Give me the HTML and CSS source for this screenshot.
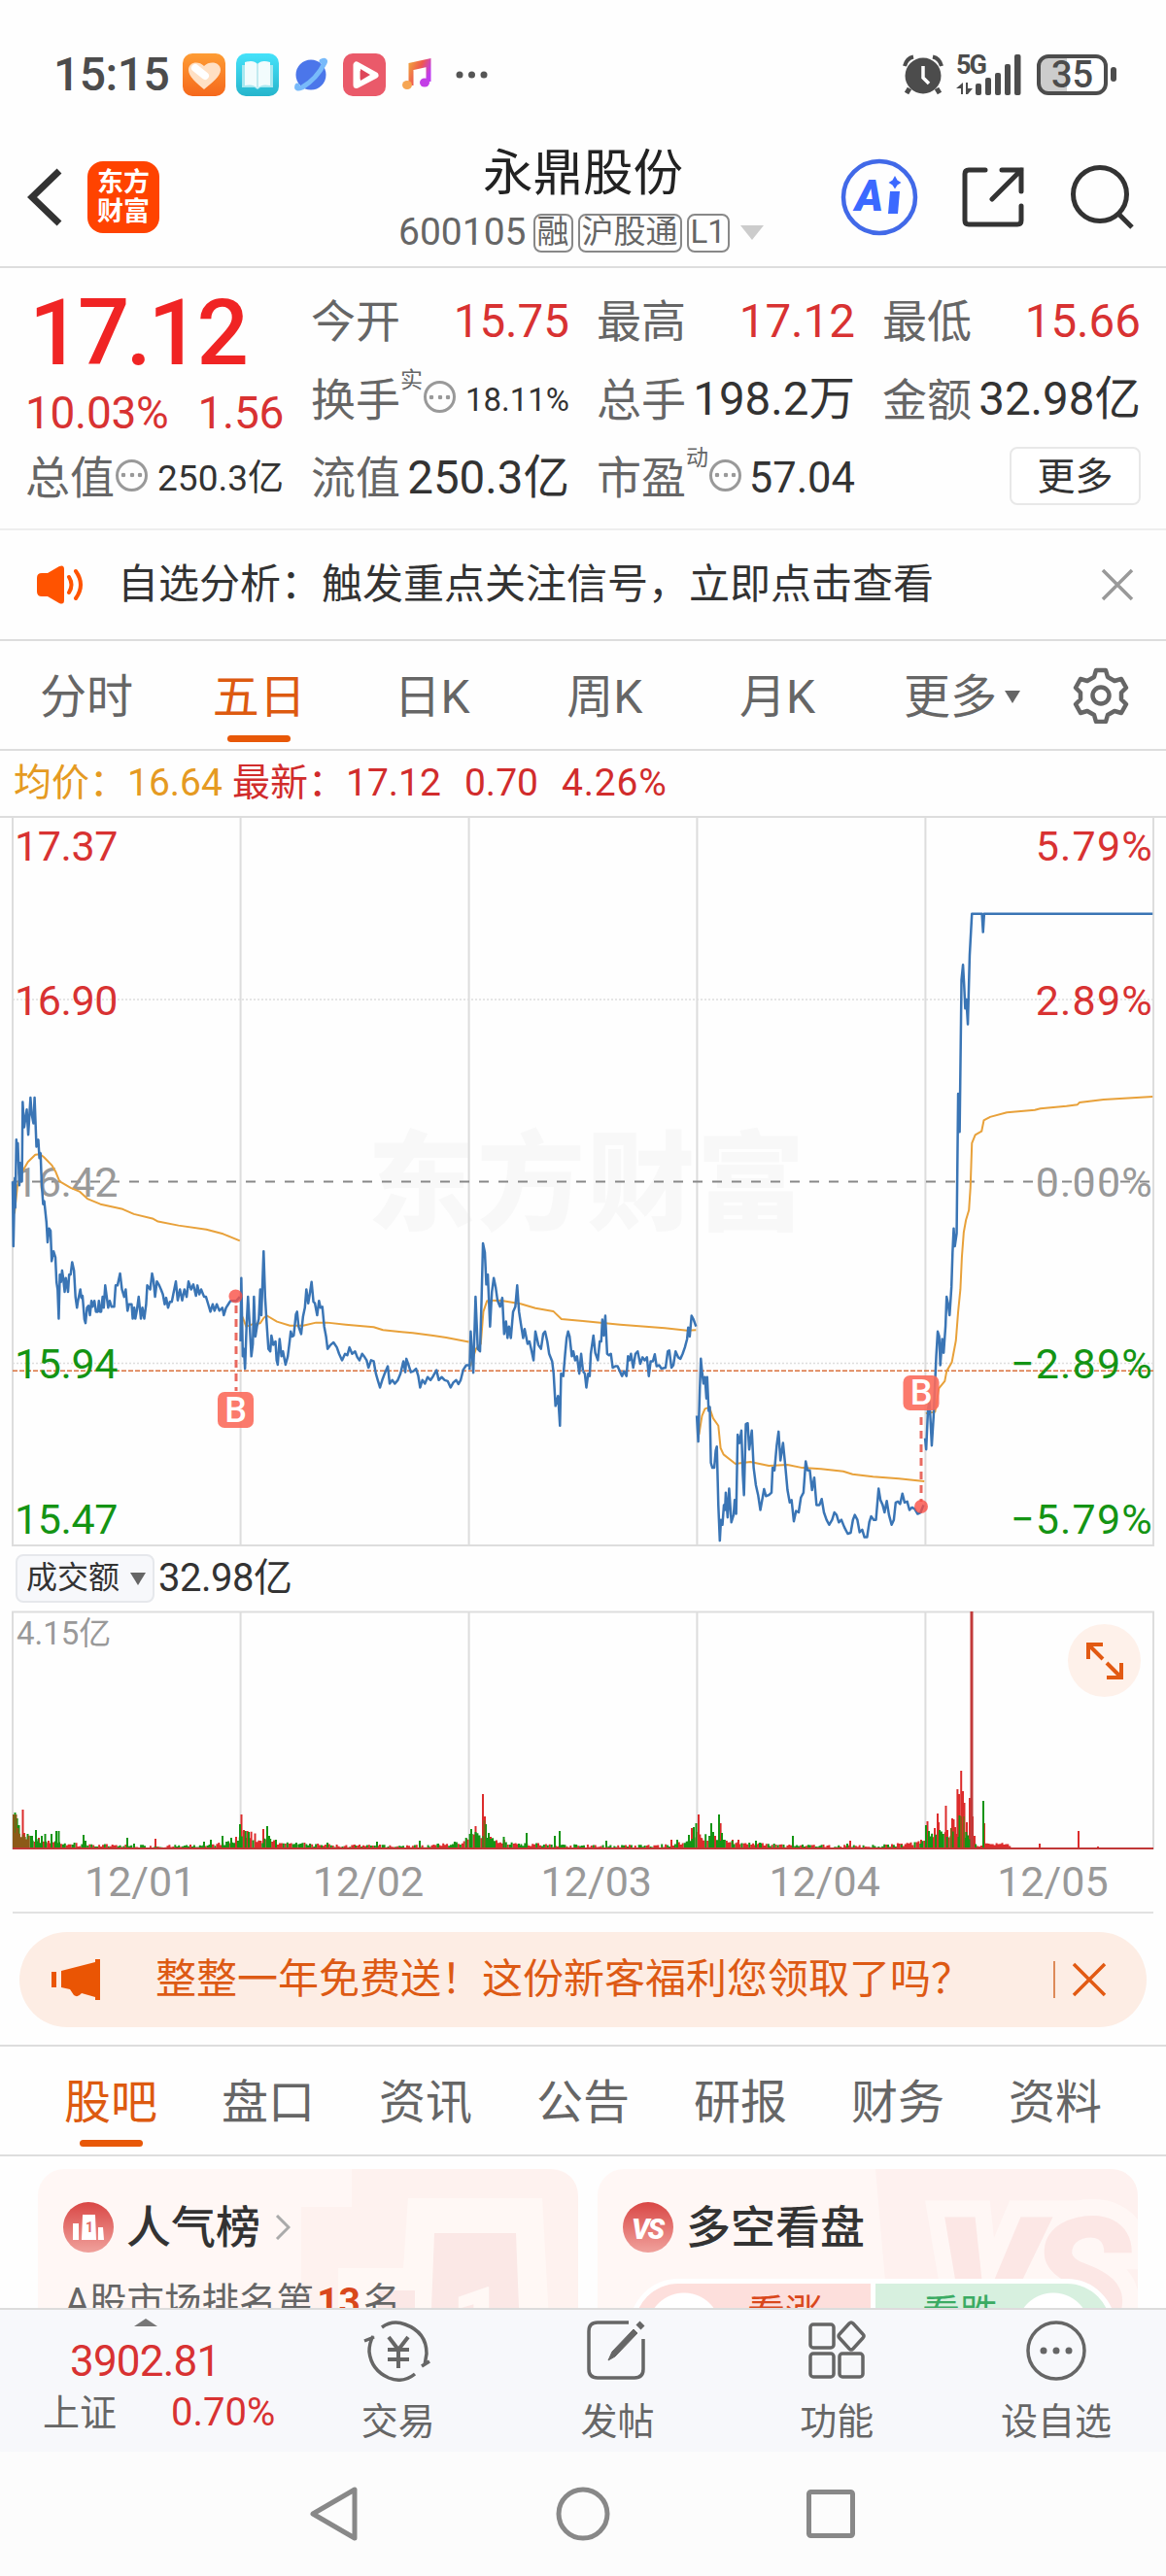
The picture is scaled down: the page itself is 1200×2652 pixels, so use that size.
FILE: index.html
```html
<!DOCTYPE html>
<html lang="zh-CN">
<head>
    <meta charset="UTF-8">
    <meta name="viewport" content="width=device-width, initial-scale=1.0">
    <title>永鼎股份 600105</title>
    <link rel="stylesheet" href="styles.css">
</head>
<body>
    <!-- Status bar -->
    <div class="status">
        <span class="clock">15:15</span>
        <svg class="app-ico" viewBox="0 0 44 44"><defs><linearGradient id="og" x2="0" y2="1"><stop stop-color="#fe9c34"/><stop offset="1" stop-color="#f5681c"/></linearGradient></defs><rect width="44" height="44" rx="10" fill="url(#og)"/><path d="M22 37C14 30 6 24 6 17c0-8 10-10 16-4 6-6 17-4 17 4 0 7-9 13-17 20z" fill="#ffe0c4"/><path d="M13 15l10 8" stroke="#fff" stroke-width="8" stroke-linecap="round"/></svg>
        <svg class="app-ico" viewBox="0 0 44 44"><defs><linearGradient id="tg" x2="0" y2="1"><stop stop-color="#45e2fa"/><stop offset="1" stop-color="#26b5cc"/></linearGradient></defs><rect width="44" height="44" rx="10" fill="url(#tg)"/><path d="M6 12h32v23H25l-3 2-3-2H6z" fill="#a8e8f0"/><path d="M9 9q9-3 13 2 4-5 13-2v24q-9-2-13 3-4-5-13-3z" fill="#f2fcfd"/><path d="M22 11v24" stroke="#c2eaf0" stroke-width="2"/></svg>
        <svg class="app-ico" viewBox="0 0 44 44"><circle cx="22" cy="22" r="15.500" fill="#4b76ea"/><path d="M8 33q-2 5 5 2Q28 26 36 10q2-4-3-2" fill="none" stroke="#78bafa" stroke-width="5" stroke-linecap="round"/></svg>
        <svg class="app-ico" viewBox="0 0 44 44"><rect width="44" height="44" rx="10" fill="#ea5a6a"/><path d="M14 12v20.500l19-10z" fill="#ea5a6a" stroke="#fff" stroke-width="7" stroke-linejoin="round"/><path d="M18 16v12l10-6z" fill="#de465a"/></svg>
        <svg class="app-ico" viewBox="0 0 44 44"><defs><linearGradient id="mg" x2="1" y2=".6"><stop stop-color="#f09a40"/><stop offset=".5" stop-color="#ef594e"/><stop offset="1" stop-color="#bf3cf0"/></linearGradient></defs><path d="M15 33V12l18-4v21M15 15l18-4" fill="none" stroke="url(#mg)" stroke-width="5"/><ellipse cx="11" cy="32.500" rx="5" ry="4.500" fill="#f6a552"/><ellipse cx="29" cy="30" rx="5" ry="4.500" fill="#c33fe6"/></svg>
        <svg class="dots" viewBox="0 0 34 10"><g fill="#555"><circle cx="4" cy="5" r="3.500"/><circle cx="16.500" cy="5" r="3.500"/><circle cx="29" cy="5" r="3.500"/></g></svg>
        <div class="status-right">
            <svg width="42" height="42" viewBox="0 0 42 42"><circle cx="21" cy="22" r="18.500" fill="#4c4c4c"/><path d="M7 35l-3 5M35 35l3 5" stroke="#4c4c4c" stroke-width="5"/><path d="M2 12Q4 4 11 2.500M40 12Q38 4 31 2.500" fill="none" stroke="#4c4c4c" stroke-width="4"/><path d="M21 12v12l6 6" fill="none" stroke="#fff" stroke-width="3.500"/></svg>
            <svg class="signal" width="68" height="42" viewBox="0 0 68 42"><text x="0" y="20" class="fiveg">5G</text><g fill="#4c4c4c"><path d="M7 29v12H5v-6H0zM10 29v12h2l5-6h-5v-6z"/><rect x="20" y="30" width="6" height="12" rx="2"/><rect x="30" y="24" width="6" height="18" rx="2"/><rect x="40" y="19" width="6" height="23" rx="2"/><rect x="50" y="10" width="6" height="32" rx="2"/><rect x="60" y="0" width="6.500" height="42" rx="2"/></g></svg>
            <div class="battery"><span>35</span></div>
        </div>
    </div>

    <!-- Title bar -->
    <div class="header">
        <div class="header-left">
            <svg width="36" height="60" viewBox="0 0 36 60"><path d="M33 3L5 30l28 27" fill="none" stroke="#333" stroke-width="7"/></svg>
            <div class="logo">东方<br>财富</div>
        </div>
        <div class="title">
            <h1>永鼎股份</h1>
            <div class="code">600105<span class="badge">融</span><span class="badge">沪股通</span><span class="badge">L1</span><i class="tri big"></i></div>
        </div>
        <div class="header-right">
            <svg width="80" height="80" viewBox="0 0 80 80"><circle cx="40" cy="40" r="37" fill="none" stroke="#4169e8" stroke-width="4.500"/><text x="15" y="54" class="ai">A</text><path d="M51 34h10l-2 23h-10z" fill="#3b69ff"/><path d="M56 18l2.500 4.500 4 2.500-4 2.500-2.500 4-2.500-4-4-2.500 4-2.500z" fill="#3b69ff"/></svg>
            <svg class="share" width="66" height="66" viewBox="0 0 66 66"><g fill="none" stroke="#333" stroke-width="5" stroke-linecap="round"><path d="M25 5H8Q4 5 4 9v48q0 4 4 4h50q4 0 4-4V42M42 5h20v22M62 5L32 35"/></g></svg>
            <svg width="68" height="68" viewBox="0 0 68 68"><g fill="none" stroke="#333" stroke-width="5"><circle cx="32" cy="31" r="27.500"/><path d="M51 51l14 14"/></g></svg>
        </div>
    </div>

    <!-- Quote -->
    <div class="quote">
        <div class="price-box">
            <div class="price">17.12</div>
            <div class="change"><span>10.03%</span><span>1.56</span></div>
        </div>
        <div class="item"><label>今开</label><b class="red">15.75</b></div>
        <div class="item"><label>最高</label><b class="red">17.12</b></div>
        <div class="item"><label>最低</label><b class="red">15.66</b></div>
        <div class="item"><label>换手</label><sup>实</sup><i class="info"></i><b class="xs">18.11%</b></div>
        <div class="item"><label>总手</label><b>198.2万</b></div>
        <div class="item"><label>金额</label><b>32.98亿</b></div>
        <div class="item"><label>总值</label><i class="info"></i><b class="sm">250.3亿</b></div>
        <div class="item"><label>流值</label><b>250.3亿</b></div>
        <div class="item"><label>市盈</label><sup>动</sup><i class="info"></i><b class="md">57.04</b></div>
        <div class="item"><button class="more">更多</button></div>
    </div>

    <div class="notice">
        <svg width="50" height="42" viewBox="0 0 50 42"><path d="M0 14q0-5 5-5h6L23 2q5-2 5 3v32q0 5-5 3l-12-7H5q-5 0-5-5z" fill="#ff5300"/><path d="M33 13q5 8 0 16M40 7q10 14 0 28" fill="none" stroke="#ff5300" stroke-width="4" stroke-linecap="round"/></svg>
        <span>自选分析：触发重点关注信号，立即点击查看</span>
        <svg width="34" height="34" viewBox="0 0 34 34"><path d="M2 2l30 30M32 2L2 32" stroke="#999" stroke-width="3.500"/></svg>
    </div>

    <div class="tabs period">
        <a>分时</a>
        <a class="on">五日</a>
        <a>日K</a>
        <a>周K</a>
        <a>月K</a>
        <a>更多<i class="tri"></i></a>
        <svg width="58" height="58" viewBox="0 0 58 58"><g fill="none" stroke="#666" stroke-width="4.500" stroke-linejoin="round"><path d="M24 3h10l2 7 7 4 7-2 5 9-5 5v7l5 5-5 9-7-2-7 4-2 7H24l-2-7-7-4-7 2-5-9 5-5v-7l-5-5 5-9 7 2 7-4z"/><circle cx="29" cy="29" r="8.500"/></g></svg>
    </div>

    <div class="legend">
        <span class="avg">均价：16.64</span><span>最新：17.12</span><span>0.70</span><span>4.26%</span>
    </div>

    <!-- Five-day price chart -->
    <svg class="chart" viewBox="0 10 1200 753">
        <text x="378" y="428" class="watermark">东方财富</text>
        <g stroke="#ddd" stroke-width="2" fill="none">
            <path d="M0 11H1200M13 11V761H1187V11M247.600 11V761M482.600 11V761M717.400 11V761M952.400 11V761"/>
            <path d="M13 199H1187M13 573.500H1187" stroke-width="1.500" stroke-dasharray="2 2"/>
        </g>
        <path d="M13 386.500H1187" stroke="#888" stroke-width="2" stroke-dasharray="10 10"/>
        <path d="M13 581.200H1187" stroke="#d9713c" stroke-width="1.500" stroke-dasharray="5 2"/>
        <g class="axis">
            <text x="15" y="56" class="up">17.37</text>
            <text x="15" y="215" class="up">16.90</text>
            <text x="15" y="402">16.42</text>
            <text x="15" y="589" class="down">15.94</text>
            <text x="15" y="749" class="down">15.47</text>
        </g>
        <g class="axis end">
            <text x="1187" y="56" class="up">5.79%</text>
            <text x="1187" y="215" class="up">2.89%</text>
            <text x="1187" y="402">0.00%</text>
            <text x="1187" y="589" class="down">−2.89%</text>
            <text x="1187" y="749" class="down">−5.79%</text>
        </g>
        <g class="line average">
            <path transform="scale(.38265 .5102)" d="M39 822L47 765 58 740 75 718 95 703 108 702 118 708 140 725 150 738 160 757 190 770 215 778 235 792 270 803 330 813 360 823 410 832 425 838 480 846 555 854 600 863 645 877M652 1030L662 1050 680 1045 700 1043 710 1032 718 1028 745 1040 780 1048 815 1048 850 1042 880 1042 930 1046 1005 1051 1030 1057 1080 1061 1110 1063 1165 1068 1200 1072 1261 1081M1265 1130L1280 1095 1293 1085 1300 1020 1310 998 1345 997 1400 1004 1440 1013 1488 1019 1510 1035 1568 1039"/>
            <path transform="translate(600 0) scale(.38265 .5102)" d="M0 1039L60 1043 100 1046 220 1053 280 1058 304 1057M312 1268L320 1230 328 1216 340 1213 350 1235 364 1250 370 1295 378 1308 410 1327 450 1323 500 1331 550 1329 590 1335 640 1337 700 1342 725 1348 780 1353 850 1357 918 1362M922 1225L947 1222 957 1175 973 1160 978 1140 992 1122 1003 1078 1009 1020 1015 975 1019 910 1024 860 1030 835 1038 815 1042 770 1046 680 1055 663 1072 656 1078 634 1095 627 1140 618 1215 613 1230 610 1300 605 1330 602 1335 598 1400 592 1532 586"/>
        </g>
        <g class="line">
            <path transform="scale(.38265 .5102)" d="M34 757L36 888 40 750 41 810 44 673 46 710 48 680 52 765 54 720 57 757 59 757 61 597 65 648 72 612 76 663 82 588 85 620 90 640 93 588 98 687 103 673 106 710 109 700 112 760 116 803 119 797 125 840 128 880 132 852 136 857 139 918 144 898 149 910 152 960 155 975 158 1034 161 945 164 960 167 937 170 952 174 980 177 952 183 980 186 945 190 945 194 920 199 937 203 990 207 1012 210 997 216 975 219 992 222 988 227 1035 230 1043 234 1012 238 1008 242 1027 246 998 249 1010 254 998 258 1020 263 1020 266 998 269 1020 272 1020 276 990 279 1012 283 967 287 990 291 1012 295 998 300 1010 307 1010 311 967 316 967 323 943 328 975 334 990 338 975 343 1018 347 1005 354 1005 357 1034 361 1012 364 1034 368 1018 373 990 379 1034 383 1012 388 1034 393 1005 396 967 404 975 409 943 413 958 417 990 422 959 427 965 433 975 438 985 443 1005 447 992 452 1012 457 1000 462 1000 466 985 473 959 478 997 484 975 490 997 496 975 502 990 507 959 514 975 520 965 527 988 531 967 536 985 541 975 549 990 554 990 560 1005 566 1020 572 1005 577 1018 583 1005 590 1018 598 1012 602 1027 608 1012 614 1005 620 998 628 998 636 998 645 990M647 1080L649 952 653 1110 656 1095 659 1135 663 1050 667 990 671 1040 676 1110 680 1085 683 990 687 1070 691 1050 696 1035 700 975 703 1027 709 898 713 990 717 1040 722 1095 727 1100 730 1068 735 1087 741 1080 744 1118 747 1127 752 1075 757 1110 761 1100 768 1127 774 1110 779 1080 782 1060 786 1070 790 1068 796 1025 799 1020 803 1050 810 1065 815 1030 820 1012 824 975 829 1003 833 985 838 960 843 1000 847 1003 853 1027 858 998 862 1012 867 1010 872 1050 877 1070 881 1095 889 1087 897 1082 906 1092 912 1105 920 1118 928 1105 934 1108 940 1092 947 1105 955 1100 961 1112 967 1118 974 1105 981 1112 986 1118 991 1133 998 1118 1005 1120 1011 1145 1016 1158 1022 1173 1028 1158 1036 1142 1043 1130 1048 1165 1055 1158 1062 1165 1070 1158 1077 1145 1085 1120 1090 1142 1093 1115 1100 1130 1105 1142 1112 1140 1119 1135 1125 1150 1130 1173 1136 1158 1143 1165 1150 1152 1158 1158 1165 1150 1174 1138 1180 1158 1188 1152 1196 1158 1204 1160 1212 1173 1219 1163 1227 1158 1233 1166 1239 1158 1246 1137 1254 1128 1261 1128M1263 1137L1266 1060 1273 1143 1279 990 1285 1095 1291 1100 1295 1000 1299 882 1304 900 1308 965 1312 945 1318 1050 1323 980 1328 952 1333 970 1338 997 1345 1010 1351 992 1356 1065 1361 1040 1365 1073 1369 1050 1374 1073 1380 1020 1386 1010 1391 967 1396 1020 1401 1045 1407 1073 1411 1055 1419 1085 1424 1080 1430 1100 1435 1118 1440 1060 1448 1087 1455 1095 1461 1065 1466 1060 1472 1080 1477 1105 1485 1120 1489 1145 1494 1210 1501 1190 1506 1250 1509 1145 1515 1150 1520 1105 1524 1073 1528 1060 1532 1070 1538 1110 1542 1100 1547 1118 1552 1110 1558 1145 1563 1105 1568 1140"/>
            <path transform="translate(600 0) scale(.38265 .5102)" d="M0 1140L5 1145 9 1173 14 1145 18 1150 21 1105 28 1068 33 1103 40 1118 45 1080 49 1080 52 1036 56 1068 60 1028 65 1105 70 1108 75 1105 80 1133 87 1130 93 1130 99 1140 105 1150 110 1140 117 1150 121 1110 125 1118 129 1105 135 1133 141 1105 147 1100 154 1125 160 1112 166 1118 172 1112 177 1150 182 1120 188 1120 193 1106 198 1130 205 1128 211 1135 222 1133 228 1100 232 1098 238 1133 243 1128 249 1100 256 1112 262 1115 268 1105 274 1092 280 1075 283 1052 287 1070 292 1028 297 1035 304 1050M306 1230L310 1282 314 1180 317 1115 320 1140 324 1165 328 1152 332 1195 334 1152 338 1220 341 1212 344 1325 348 1335 353 1335 357 1300 360 1292 364 1410 368 1482 371 1440 375 1450 379 1410 382 1420 384 1385 389 1435 393 1377 399 1445 405 1430 408 1400 412 1428 416 1268 421 1285 426 1260 430 1350 433 1390 438 1247 443 1245 447 1298 454 1260 459 1335 465 1370 471 1390 477 1420 483 1395 487 1378 492 1392 500 1390 507 1385 510 1335 515 1340 521 1290 526 1262 531 1320 538 1285 544 1330 550 1380 556 1405 561 1400 567 1443 573 1422 580 1425 586 1395 593 1385 599 1322 604 1340 610 1340 616 1380 622 1355 628 1410 636 1410 642 1398 648 1425 655 1440 662 1450 670 1440 676 1425 682 1430 688 1445 695 1440 703 1455 712 1468 720 1466 726 1440 731 1430 738 1440 744 1465 751 1460 757 1475 764 1475 770 1445 775 1433 782 1440 788 1440 795 1377 800 1400 806 1410 811 1425 817 1402 823 1430 830 1450 836 1440 841 1405 847 1403 853 1408 859 1387 865 1405 872 1403 878 1420 885 1415 892 1418 900 1428 908 1425 916 1410M920 1275L923 1298 928 1215 932 1200 938 1290 943 1230 947 1160 950 1110 954 1060 958 1070 961 1128 966 1075 970 1103 975 1050 978 990 982 1005 986 1027 991 970 994 900 997 852 1000 888 1005 862 1009 580 1013 657 1018 350 1022 320 1025 360 1028 408 1031 390 1035 440 1040 300 1046 217 1073 217 1076 254 1079 217 1532 217"/>
        </g>
        <!-- Buy markers -->
        <g class="buy">
            <path d="M243 514V602M948 629V716"/>
            <circle cx="242.500" cy="504.500" r="7"/><circle cx="948" cy="721" r="7"/>
            <rect x="224" y="603" width="37" height="37" rx="7"/><rect x="329.500" y="586" width="37" height="36" rx="7" transform="translate(600 0)"/>
            <text x="242.500" y="634">B</text><text x="948" y="616">B</text>
        </g>
    </svg>

    <div class="vol-head"><span class="select">成交额<i class="tri"></i></span>32.98亿</div>

    <div class="volume">
        <svg viewBox="0 1658 1200 248">
            <path d="M13 1904V1659.500H1187V1904M247.600 1660V1904M482.600 1660V1904M717.400 1660V1904M952.400 1660V1904" fill="none" stroke="#ddd" stroke-width="2"/>
            <text x="17" y="1693" class="vol-max">4.15亿</text>
            <path id="volRed" stroke="#dc2c2c" stroke-width="2"/>
            <path id="volGreen" stroke="#149414" stroke-width="2"/>
            <path id="volMix" stroke="#8c5a18" stroke-width="2"/>
            <path id="volTall" stroke="#c13a3a" stroke-width="3"/>
            <path d="M13 1903H1187" stroke="#c03838" stroke-width="2"/>
        </svg>
        <div class="expand"><svg width="38" height="38" viewBox="0 0 38 38"><path d="M2 17V2h15M2 2l15 15M36 21v15H21M36 36L21 21" fill="none" stroke="#e25a13" stroke-width="4"/></svg></div>
    </div>
    <div class="dates"><span>12/01</span><span>12/02</span><span>12/03</span><span>12/04</span><span>12/05</span></div>

    <div class="promo">
        <svg width="50" height="42" viewBox="0 0 50 42"><path d="M0 13h5v16H0zM10 12L45 3V0h5v42h-5v-3l-14-4q-4 5-8 2l-4-6-9-2z" fill="#ea5504"/></svg>
        <span>整整一年免费送！这份新客福利您领取了吗？</span>
        <i></i>
        <svg width="36" height="36" viewBox="0 0 36 36"><path d="M2 2l32 32M34 2L2 34" stroke="#e25a13" stroke-width="3.500"/></svg>
    </div>

    <div class="tabs section">
        <a class="on">股吧</a>
        <a>盘口</a>
        <a>资讯</a>
        <a>公告</a>
        <a>研报</a>
        <a>财务</a>
        <a>资料</a>
    </div>

    <div class="cards">
        <div class="card">
            <svg class="card-bg" viewBox="0 0 556 220"><path d="M271 220V39h52V0h200q33 0 33 30v190z" fill="#fef2ef"/><path d="M309 220V102h67l5-72h138l7 125h15v65z" fill="#fff8f5"/><path d="M350 220v-95h38v95zM402 220l6-154h84l6 154zM512 220v-65h32v65z" fill="#fbe8e6"/><text x="425" y="190" class="one">1</text></svg>
            <div class="card-title">
                <svg width="52" height="52" viewBox="0 0 52 52"><use href="#disc"/><path d="M10 39V22h6v17zM19 39l1-26h13l1 26zM36 39V26h5l1 13z" fill="#fff"/><text x="23" y="31" class="mini">1</text></svg>
                人气榜
                <svg class="arrow" width="16" height="26" viewBox="0 0 16 26"><path d="M2 1l12 12L2 25" fill="none" stroke="#aaa" stroke-width="3"/></svg>
            </div>
            <div class="rank">A股市场排名第<b>13</b>名</div>
        </div>
        <div class="card">
            <svg class="card-bg" viewBox="0 0 556 220"><path d="M286 0h240q30 0 30 30v190H305z" fill="#fef1ef"/><text x="346" y="172" class="vs-bg">VS</text></svg>
            <div class="card-title">
                <svg width="52" height="52" viewBox="0 0 52 52"><defs><linearGradient id="rg" x2="0" y2="1"><stop stop-color="#d94745"/><stop offset="1" stop-color="#f0a19c"/></linearGradient></defs><circle id="disc" cx="26" cy="26" r="26" fill="url(#rg)"/><text x="9" y="38" class="vs">VS</text></svg>
                多空看盘
            </div>
            <div class="vote"><span class="bull">看涨</span><span class="bear">看跌</span></div>
        </div>
    </div>

    <!-- Bottom toolbar -->
    <div class="toolbar">
        <div class="index">
            <i class="caret"></i>
            <div class="point">3902.81</div>
            <div class="pct"><label>上证</label><span>0.70%</span></div>
        </div>
        <a><svg viewBox="0 0 72 64"><path d="M19 8Q30 0 43 5q22 8 22 30l-2 12M53 56q-12 10-27 4Q8 52 6 33q0-9 4-16M1 22l10-4M60 48l8-5" stroke-width="3.500"/><path d="M26 18l10 13 10-13M36 31v19M25 31h22M25 41h22" stroke-width="4"/></svg>交易</a>
        <a><svg viewBox="0 0 72 64"><path d="M48 3H16Q7 3 7 12v39q0 9 9 9h38q9 0 9-9V20"/><path d="M27 42l4-9L53 10l4 4-23 24z" fill="#666" stroke-width="1"/><path d="M58 8l4-4" stroke-width="7"/></svg>发帖</a>
        <a><svg viewBox="0 0 72 64"><rect x="9" y="5" width="24" height="24" rx="3"/><rect x="9" y="35" width="24" height="24" rx="3"/><rect x="39" y="35" width="24" height="24" rx="3"/><path d="M49 4q2-2 4 0l10 11q2 2 0 4L53 30q-2 2-4 0L39 19q-2-2 0-4z"/></svg>功能</a>
        <a><svg viewBox="0 0 72 64"><circle cx="36" cy="32" r="29"/><g fill="#666" stroke="none"><circle cx="23" cy="32" r="3.500"/><circle cx="36" cy="32" r="3.500"/><circle cx="49" cy="32" r="3.500"/></g></svg>设自选</a>
    </div>

    <div class="sysnav">
        <svg width="58" height="58" viewBox="0 0 58 58"><path d="M49 4v50L6 29z"/></svg>
        <svg width="58" height="58" viewBox="0 0 58 58"><circle cx="29" cy="29" r="25"/></svg>
        <svg width="58" height="58" viewBox="0 0 58 58"><rect x="6.500" y="6.500" width="45" height="45" rx="2"/></svg>
    </div>

    <script src="volume.js"></script>
</body>
</html>
```
FILE: styles.css
```css
* { margin: 0; padding: 0; box-sizing: border-box; }
body { width: 1200px; height: 2652px; overflow: hidden; background: #fefefe; color: #333; font-family: Roboto, "Noto Sans CJK SC", sans-serif; line-height: 1; }
svg { display: block; flex: none; }
i { display: block; font-style: normal; }
b { font-weight: 400; }

/* Status bar */
.status { display: flex; align-items: center; height: 142px; padding: 12px 51px 0 55px; color: #4c4c4c; }
.clock { width: 133px; font-size: 48px; font-weight: 500; letter-spacing: -0.5px; }
.app-ico { width: 44px; height: 44px; margin-right: 11px; }
.dots { width: 34px; height: 10px; margin-left: 6px; }
.status-right { display: flex; align-items: center; margin-left: auto; }
.signal { margin: 0 15px 0 13px; overflow: visible; }
.fiveg { font-size: 27px; font-weight: 700; fill: #4c4c4c; letter-spacing: -2px; }
.battery { position: relative; width: 73px; height: 42px; margin-right: 9px; border: 4px solid #4c4c4c; border-radius: 12px; background: linear-gradient(90deg, #ccc 42%, #fff 42%); font-size: 38px; font-weight: 500; line-height: 35px; text-align: center; }
.battery::after { content: ""; position: absolute; right: -13px; top: 9px; width: 6px; height: 15px; border-radius: 3px; background: #4c4c4c; }

/* Title bar */
.header { display: flex; justify-content: space-between; height: 134px; border-bottom: 2px solid #ddd; }
.header-left, .header-right { display: flex; align-items: center; width: 340px; height: 122px; }
.header-left { padding-left: 28px; }
.header-right { padding-left: 5px; }
.logo { width: 74px; height: 74px; margin-left: 26px; padding-top: 7px; border-radius: 16px; background: #ff4300; color: #fff; font-size: 27px; font-weight: 700; line-height: 30px; text-align: center; }
.title { width: 400px; text-align: center; }
h1 { height: 67px; padding-top: 10px; font-size: 51.5px; font-weight: 400; line-height: 54px; color: #222; }
.code { display: flex; align-items: center; height: 61px; padding-left: 10px; color: #666; font-size: 39px; white-space: nowrap; }
.badge { height: 40px; margin-left: 5px; padding: 0 2px; border: 2px solid #888; border-radius: 8px; font-size: 33px; line-height: 34px; }
.code .badge:nth-child(1) { margin-left: 7px; }
.tri { width: 0; border: solid transparent; border-width: 13px 8px 0; border-top-color: #666; }
.tri.big { margin-left: 11px; border-width: 15px 12px 0; border-top-color: #ccc; }
.ai { font-size: 44px; font-weight: 900; font-style: italic; fill: #3b69ff; }
.share { margin: 0 45px 0 44px; }

/* Quote */
.quote { display: grid; grid-template-columns: repeat(4, 266px); grid-template-rows: repeat(3, 80.5px); column-gap: 28px; height: 270px; padding: 15px 0 0 26px; border-bottom: 2px solid #eee; }
.price-box { grid-row: span 2; color: #f02424; }
.price { height: 105px; padding: 5px 0 0 4px; font-size: 94px; font-weight: 500; letter-spacing: -3.5px; }
.change { display: flex; justify-content: space-between; color: #d83232; font-size: 46px; line-height: 58px; letter-spacing: -0.3px; }
.item { display: flex; align-items: center; white-space: nowrap; }
.item label { color: #666; font-size: 46px; }
.item b { margin-left: auto; font-size: 47.5px; }
.item b.xs { font-size: 33px; }
.item b.sm { font-size: 37px; }
.item b.md { font-size: 43.5px; }
.item b.red { color: #d83232; }
.item sup { align-self: flex-start; padding-top: 8px; color: #666; font-size: 23px; }
.info { width: 33px; height: 33px; margin: -6px 0 0 1px; border: 3px solid #999; border-radius: 50%; background: radial-gradient(circle, #999 2px, transparent 2.600px) center / 8px 8px no-repeat, radial-gradient(circle, #999 2px, transparent 2.600px) 1px center / 8px 8px no-repeat, radial-gradient(circle, #999 2px, transparent 2.600px) 18px center / 8px 8px no-repeat; }
.more { width: 135px; height: 60px; margin: -4px 0 0 auto; border: 2px solid #e8e8e8; border-radius: 8px; background: #fff; color: #333; font: 400 39px/48px "Noto Sans CJK SC", sans-serif; padding-bottom: 6px; }

.notice { display: flex; align-items: center; height: 114px; padding: 0 33px 0 38px; border-bottom: 2px solid #ddd; font-size: 42px; }
.notice span { flex: 1; margin-left: 33px; }

/* Tabs */
.tabs { display: flex; align-items: center; height: 113px; border-bottom: 2px solid #ddd; color: #666; font-size: 48px; }
.tabs a { display: flex; position: relative; align-items: center; justify-content: center; height: 111px; padding-top: 4px; }
.tabs .on { color: #dd5a10; }
.tabs .on::after { content: ""; position: absolute; bottom: 7px; width: 65px; height: 7px; border-radius: 4px; background: #e85808; }
.period { padding-left: -1px; }
.period a { width: 177.8px; }
.period a:nth-child(6) { width: 202px; }
.tabs .tri { margin-left: 8px; }
.period svg { margin-left: 13px; }
.section { padding-left: 33px; }
.section a { width: 162px; }
.section .on::after { bottom: 8px; }

.legend { display: flex; height: 67px; padding-left: 14px; color: #d12c2c; font-size: 39px; line-height: 66px; }
.legend span { margin-right: 24px; }
.legend span:last-child { letter-spacing: 0.8px; }
.legend .avg { margin-right: 10px; color: #e59a22; }

/* Price chart */
.chart { width: 1200px; height: 753px; }
.axis { font-size: 43px; fill: #999; letter-spacing: -0.4px; }
.axis.end { text-anchor: end; letter-spacing: 1.2px; }
.up { fill: #d83232; }
.down { fill: #149414; }
.line { fill: none; stroke: #3a75b5; stroke-width: 2.500; stroke-linejoin: round; }
.line path { vector-effect: non-scaling-stroke; }
.line.average { stroke: #e8a13a; stroke-width: 2; }
.watermark { font-size: 111px; font-weight: 900; fill: #f8f8f8; letter-spacing: 2px; }
.buy { fill: #f94f45; fill-opacity: .8; }
.buy path { stroke: #e96a60; stroke-width: 3; stroke-dasharray: 8 6; }
.buy rect { fill: #fb6c5c; fill-opacity: .9; }
.buy text { font-size: 36px; font-weight: 500; fill: #fff; fill-opacity: 1; text-anchor: middle; }

/* Volume */
.vol-head { display: flex; align-items: center; height: 65px; padding: 0 0 2px 16px; font-size: 40px; letter-spacing: -0.500px; }
.select { display: flex; align-items: center; width: 143px; height: 50px; margin-right: 4px; padding: 0 0 2px 9px; border: 2px solid #e6e8ec; border-radius: 8px; background: #f7f8fb; font-size: 32px; letter-spacing: 0; }
.select .tri { margin: 3px 0 0 11px; }
.volume { position: relative; height: 248px; }
.vol-max { font-size: 33px; fill: #999; }
.expand { display: flex; position: absolute; top: 14px; right: 26px; align-items: center; justify-content: center; width: 75px; height: 75px; border-radius: 50%; background: #fef1ea; }
.dates { display: flex; height: 64px; margin: 0 13px; padding-left: 20px; border-bottom: 2px solid #e2e2e2; color: #999; font-size: 43px; line-height: 62px; }
.dates span { width: 234.800px; flex: none; padding-left: 54px; }

.promo { display: flex; align-items: center; height: 98px; margin: 19px 20px 18px; padding: 0 41px 0 33px; border-radius: 49px; background: #fdede4; color: #dd5a14; font-size: 42px; }
.promo span { flex: 1; margin-left: 57px; white-space: nowrap; }
.promo i { width: 2px; height: 38px; margin-right: 17px; background: #dd8a58; }
.section { border-top: 2px solid #ddd; height: 115px; }

/* Cards */
.cards { display: flex; gap: 20px; height: 156px; padding: 13px 29px 0 39px; overflow: hidden; }
.card { position: relative; width: 556px; height: 220px; border-radius: 27px; background: #fff7f5; overflow: hidden; }
.card-bg { position: absolute; inset: 0; width: 556px; height: 220px; }
.card-title { display: flex; position: relative; align-items: center; height: 119px; padding-left: 26px; color: #333; font-size: 46px; font-weight: 500; }
.card-title svg:first-child { margin-right: 13px; }
.card-title .arrow { margin-left: 15px; }
.rank { position: relative; margin-top: -2px; padding-left: 28px; color: #666; font-size: 38.5px; line-height: 40px; }
.rank b { padding: 0 3px; color: #d9481c; font-size: 39px; font-weight: 700; }
.one { font-size: 96px; font-weight: 900; fill: #fff8f5; }
.mini { font-size: 14px; font-weight: 700; fill: #e06b67; }
.vs { font: italic 900 29px Roboto, sans-serif; fill: #fff; letter-spacing: -2px; }
.vs-bg { font: italic 900 172px Roboto, sans-serif; fill: #fce7e5; letter-spacing: -12px; stroke: #fff7f5; stroke-width: 34; paint-order: stroke; }
.vote { display: flex; position: relative; gap: 5px; width: 500px; height: 100px; margin: -6px 0 0 33px; border: 5px solid #fff; border-radius: 50px; background: #fff; overflow: hidden; font-size: 39px; line-height: 62px; }
.vote span { flex: none; width: 243px; background: radial-gradient(circle at 51px 47px, #fff 37px, transparent 38px) #fddfdc; color: #d9481c; padding-left: 116px; }
.vote .bear { background: radial-gradient(circle at 183px 47px, #fff 37px, transparent 38px) #d7f0df; color: #3bab63; padding-left: 48px; }

/* Bottom toolbar */
.toolbar { display: flex; height: 148px; border-top: 2px solid #dcdcdc; background: #f7f8fb; color: #666; font-size: 38px; }
.toolbar a { display: flex; flex-direction: column; align-items: center; width: 226px; padding-top: 10px; line-height: 82px; }
.toolbar a svg { width: 72px; height: 64px; fill: none; stroke: #666; stroke-width: 3.500; }
.index { width: 297px; padding-top: 9px; color: #d83232; }
.caret { width: 0; margin-left: 138px; border: solid transparent; border-width: 0 12px 8px; border-bottom-color: #777; }
.point { padding-left: 72px; font-size: 44px; line-height: 72px; letter-spacing: -0.8px; }
.pct { display: flex; padding-left: 44px; line-height: 34px; }
.pct label { width: 132px; color: #666; }
.pct span { font-size: 40px; }

.sysnav { display: flex; justify-content: center; gap: 197px; height: 129px; padding-top: 35px; background: #fcfcfc; }
.sysnav svg { fill: none; stroke: #888; stroke-width: 5; stroke-linejoin: round; }
```
FILE: volume.js
```js
// x position -> bar height, grouped by colour
var red = [[23.5,41],[25,17],[40,12],[50,9],[160,11],[243,13],[248.5,36],[251,20],[253,12],[271,21],[319,6],[365,5],[391,5],[480,11],[489.5,24],[497,57],[499,34],[505,13],
    [691,10],[712,22],[719,36],[721,12],[736,11],[741.6,27],[754,10],[760,10],[875,9],[928,6],[948,10],[954.5,29],[962,22],[965,37],[966,28],[973.5,45],[975,20],[980,32],[981.5,31],[983,23],[985.4,62],[987,57],[989.2,81],[991,60],[992.5,48],[995,28],[998,53],[1001,34],[1003,14],[1013,27],[1017.5,6],[1027,5],[1070,6],[1110,19],[1130,3]];
var green = [[15.5,38],[17.6,32],[19.5,25],[28.5,16],[33,14],[37,20],[43,14],[46.5,16],[53,16],[58,19],[60.5,19],[86,15],[88,9],[131,12],[138,6],[210,8],[217,10],[229,14],[238,12],[247,26],[256,18],[275,24],[277,14],[284,10],[305,7],[337,7],[388,8],[432,9],[451,6],[485,21],[500,26],[503,17],[518.5,13],[534,6],[542,17],[571,14],[576,19],
    [624,9],[697,10],[709,15],[714,23],[716.5,27],[732,27],[734,18],[740,36],[743,17],[778,9],[782,7],[816,14],[872,6],[914,5],[953,25],[956,19],[967,20],[987.5,35],[1012,50]];
var mix = [[14,36],[16.5,36],[18.5,22],[498.5,30],[989,34],[992,34],[979,22]];

var seed = 7;
function rnd() {
    seed = (seed * 16807) % 2147483647;
    return seed / 2147483647;
}

function bar(p) {
    return "M" + p[0].toFixed(1) + " 1904V" + (1904 - p[1]).toFixed(1);
}

// low-volume minutes: busy at the open, quiet at midday, picking up at the close
for (var i = 0; i < 600; i++) {
    var day = Math.floor(i / 120), t = (i % 120) / 120;
    var x = 14 + day * 234.8 + t * 234.8;
    var open = 17 * Math.exp(-t * 7), close = 11 * Math.pow(t, 14);
    var h = 1.5 + rnd() * 3.2 + (open + close) * (0.5 + rnd() * 0.6);
    if (day == 4) h = x < 1003 ? 10 + rnd() * 9 : (x < 1040 ? 3 + rnd() * 4 : 2);
    var list = rnd() < 0.5 || (day == 4 && x > 1013) ? red : green;
    if (day == 0 && t < 0.07) list = mix;
    list.push([x, h]);
}

document.getElementById("volRed").setAttribute("d", red.map(bar).join(""));
document.getElementById("volGreen").setAttribute("d", green.map(bar).join(""));
document.getElementById("volMix").setAttribute("d", mix.map(bar).join(""));
document.getElementById("volTall").setAttribute("d", bar([1000, 245]));
```
